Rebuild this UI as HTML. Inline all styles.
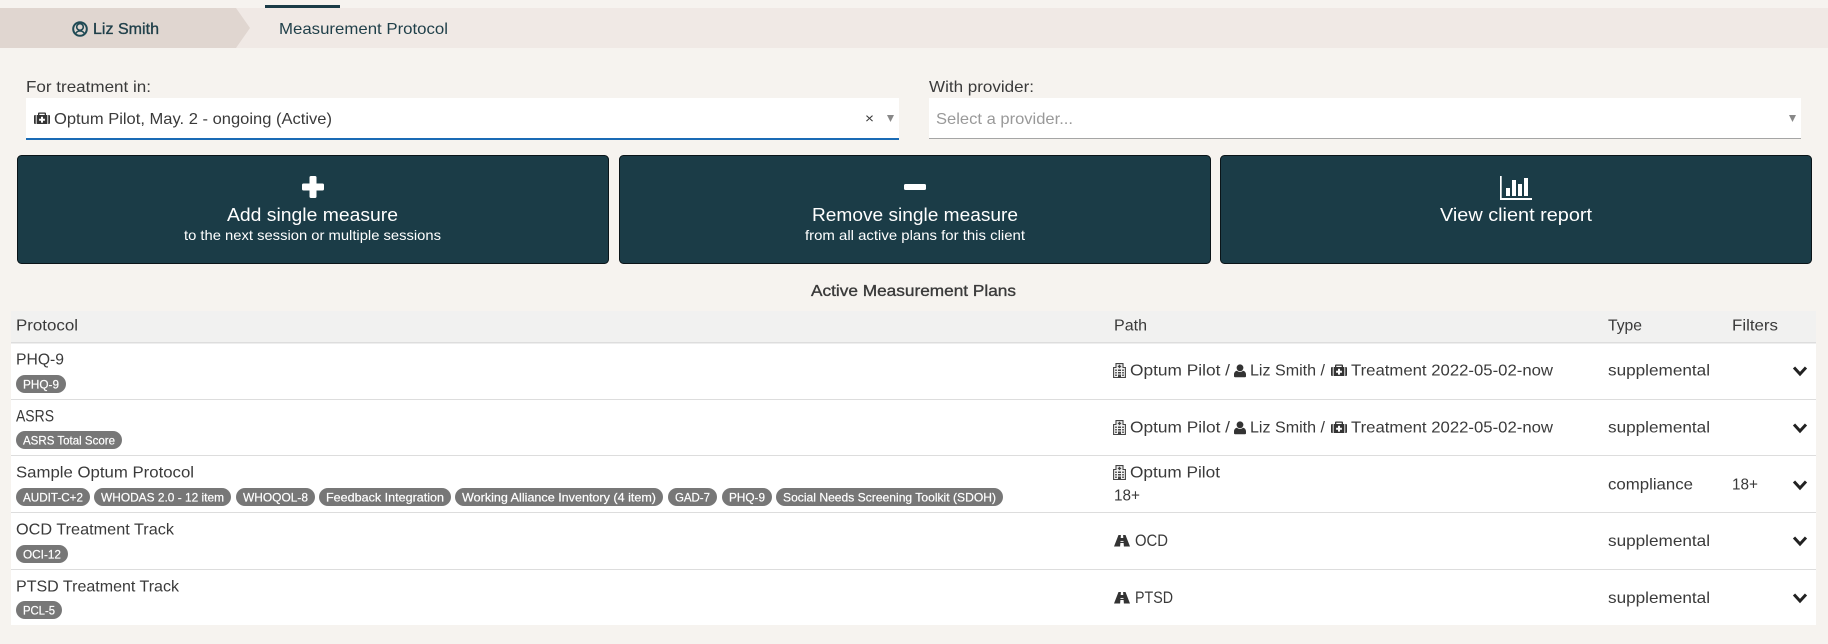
<!DOCTYPE html>
<html><head><meta charset="utf-8"><title>Measurement Protocol</title>
<style>
html,body{margin:0;padding:0;background:#f6f3ef;width:1828px;height:644px;overflow:hidden}
svg{display:block;font-family:"Liberation Sans",sans-serif;font-size:16px;fill:#3a3a3a}
.b{font-size:12px;fill:#fff;stroke:#fff;stroke-width:.2px}
.w{fill:#fff}
.t{fill:#1f3f49}
.s{stroke-width:.35px}
</style></head><body>
<svg width="1828" height="644" viewBox="0 0 1828 644" xmlns="http://www.w3.org/2000/svg">
<defs>
<g id="med"><path d="M5 1.500h6a1 1 0 0 1 1 1V4h3a1 1 0 0 1 1 1v7a1 1 0 0 1-1 1H1a1 1 0 0 1-1-1V5a1 1 0 0 1 1-1h3V2.500a1 1 0 0 1 1-1zM5.300 2.800V4h5.400V2.800z" fill="#333" fill-rule="evenodd"/><path d="M2.200 4v9M13.800 4v9" stroke="#fff" stroke-width=".9"/><path d="M7 5.800h2v1.900h1.900v2H9v1.900H7V9.700H5.100v-2H7z" fill="#fff"/></g>
<g id="hos"><path d="M.6 14.500V4.500h2.400V.6h7v3.900h2.400v10z" fill="#f4f4f4" stroke="#444" stroke-width="1.100"/><path d="M5.800 1.800h1.400v1h1v1.300h-1v1H5.800v-1h-1V2.800h1zM2.200 6.500h1.600V8H2.200zM2.200 9h1.600v1.500H2.200zM2.200 11.500h1.600V13H2.200zM5 6.500h3V8H5zM5 9h3v1.500H5zM9.200 6.500h1.600V8H9.200zM9.200 9h1.600v1.500H9.200zM9.200 11.500h1.600V13H9.200zM5 11.500h3V15H5z" fill="#444"/></g>
<g id="usr"><circle cx="6" cy="3.800" r="3.400" fill="#333"/><path d="M0 12.300V10.500C0 8.300 1.500 7 3 6.800c.8.800 1.900 1.200 3 1.200s2.200-.4 3-1.200c1.500.2 3 1.500 3 3.700v1.800c0 .6-.5 1-1 1H1c-.5 0-1-.4-1-1z" fill="#333"/></g>
<g id="road"><path d="M4.500 0h2.400l-.2 3h2.600L9.100 0h2.400L16 11.500H9.900L9.600 8H6.400L6.100 11.500H0z" fill="#333"/><path d="M6.700 3.200h2.600l.2 2.800h-3z" fill="#333"/><path d="M6.500 6.400h3" stroke="#fff" stroke-width=".9"/></g>
<path id="chev" d="M1 1.500l6 6.500 6-6.500" fill="none" stroke="#222" stroke-width="3"/>
</defs>

<!-- Breadcrumb bar -->
<rect y="8" width="1828" height="40" fill="#f0e9e5"/>
<path d="M0 8H236L250 28 236 48H0z" fill="#e0d6d0"/>
<rect x="265" y="5" width="75" height="3" fill="#1b3c47"/>
<circle cx="80" cy="29" r="6.800" fill="none" stroke="#1f4a54" stroke-width="2"/>
<circle cx="80" cy="27" r="3.300" fill="none" stroke="#1f4a54" stroke-width="1.600"/>
<path d="M75.500 34.500c.5-2.500 2-3.500 4.500-3.500s4 1 4.500 3.500" fill="none" stroke="#1f4a54" stroke-width="1.400"/>
<text x="93" y="34" textLength="66" lengthAdjust="spacingAndGlyphs" class="t s" stroke="#1f3f49">Liz Smith</text>
<text x="279" y="34" textLength="169" lengthAdjust="spacingAndGlyphs" class="t">Measurement Protocol</text>

<!-- Filters -->
<text x="26" y="92" textLength="125" lengthAdjust="spacingAndGlyphs">For treatment in:</text>
<rect x="26" y="98" width="873" height="42" fill="#fff"/>
<rect x="26" y="138" width="873" height="2" fill="#1a6bb5"/>
<use href="#med" x="34" y="111"/>
<text x="54" y="124" textLength="278" lengthAdjust="spacingAndGlyphs">Optum Pilot, May. 2 - ongoing (Active)</text>
<text x="865" y="123" textLength="9" lengthAdjust="spacingAndGlyphs" font-size="14">×</text>
<path d="M887 115h7l-3.500 7z" fill="#888"/>

<text x="929" y="92" textLength="105" lengthAdjust="spacingAndGlyphs">With provider:</text>
<rect x="929" y="98" width="872" height="41" fill="#fff"/>
<rect x="929" y="138" width="872" height="1" fill="#a5a5a5"/>
<text x="936" y="124" textLength="137" lengthAdjust="spacingAndGlyphs" fill="#999">Select a provider...</text>
<path d="M1789 115h7l-3.500 7z" fill="#888"/>

<!-- Buttons -->
<rect x="17.500" y="155.500" width="591" height="108" rx="4" fill="#1b3c47" stroke="#0a1418"/>
<rect x="619.500" y="155.500" width="591" height="108" rx="4" fill="#1b3c47" stroke="#0a1418"/>
<rect x="1220.500" y="155.500" width="591" height="108" rx="4" fill="#1b3c47" stroke="#0a1418"/>
<rect x="309.500" y="176" width="7" height="22" rx="1.500" fill="#fff"/>
<rect x="302" y="183.500" width="22" height="7" rx="1.500" fill="#fff"/>
<rect x="904" y="184" width="22" height="6" rx="1.500" fill="#fff"/>
<path d="M1500 176h1.700v22H1532v2h-32zM1506 188h4v8h-4zM1512 180h4v16h-4zM1518 184h4v12h-4zM1524 178h4v18h-4z" fill="#fff"/>
<text x="227" y="221" textLength="171" lengthAdjust="spacingAndGlyphs" font-size="18" class="w">Add single measure</text>
<text x="184" y="240" textLength="257" lengthAdjust="spacingAndGlyphs" font-size="14" class="w">to the next session or multiple sessions</text>
<text x="812" y="221" textLength="206" lengthAdjust="spacingAndGlyphs" font-size="18" class="w">Remove single measure</text>
<text x="805" y="240" textLength="220" lengthAdjust="spacingAndGlyphs" font-size="14" class="w">from all active plans for this client</text>
<text x="1440" y="221" textLength="152" lengthAdjust="spacingAndGlyphs" font-size="18" class="w">View client report</text>

<text x="811" y="296" textLength="205" lengthAdjust="spacingAndGlyphs" class="s" stroke="#3a3a3a">Active Measurement Plans</text>

<!-- Table -->
<rect x="11" y="311" width="1805" height="32" fill="#f1f1f0"/>
<rect x="11" y="342" width="1805" height="283" fill="#fff"/>
<rect x="11" y="342" width="1805" height="1.500" fill="#ddd"/>
<rect x="11" y="399" width="1805" height="1" fill="#ddd"/>
<rect x="11" y="455" width="1805" height="1" fill="#ddd"/>
<rect x="11" y="512" width="1805" height="1" fill="#ddd"/>
<rect x="11" y="569" width="1805" height="1" fill="#ddd"/>
<text x="16" y="330.500" textLength="62" lengthAdjust="spacingAndGlyphs">Protocol</text>
<text x="1114" y="330.500" textLength="33" lengthAdjust="spacingAndGlyphs">Path</text>
<text x="1608" y="330.500" textLength="34" lengthAdjust="spacingAndGlyphs">Type</text>
<text x="1732" y="330.500" textLength="46" lengthAdjust="spacingAndGlyphs">Filters</text>

<!-- Row 1 -->
<text x="16" y="364.500" textLength="48" lengthAdjust="spacingAndGlyphs">PHQ-9</text>
<rect x="16" y="375" width="50" height="18" rx="9" fill="#777"/>
<text x="23" y="388.500" textLength="36" lengthAdjust="spacingAndGlyphs" class="b">PHQ-9</text>
<use href="#hos" x="1113" y="363"/>
<text x="1130" y="375.500" textLength="100" lengthAdjust="spacingAndGlyphs">Optum Pilot /</text>
<use href="#usr" x="1234" y="364"/>
<text x="1250" y="375.500" textLength="75" lengthAdjust="spacingAndGlyphs">Liz Smith /</text>
<use href="#med" x="1331" y="363"/>
<text x="1351" y="375.500" textLength="202" lengthAdjust="spacingAndGlyphs">Treatment 2022-05-02-now</text>
<text x="1608" y="375.500" textLength="102" lengthAdjust="spacingAndGlyphs">supplemental</text>
<use href="#chev" x="1793" y="366"/>

<!-- Row 2 -->
<text x="16" y="421.500" font-size="17" textLength="38" lengthAdjust="spacingAndGlyphs">ASRS</text>
<rect x="16" y="431" width="106" height="18" rx="9" fill="#777"/>
<text x="23" y="444.500" textLength="92" lengthAdjust="spacingAndGlyphs" class="b">ASRS Total Score</text>
<use href="#hos" x="1113" y="420"/>
<text x="1130" y="432.500" textLength="100" lengthAdjust="spacingAndGlyphs">Optum Pilot /</text>
<use href="#usr" x="1234" y="421"/>
<text x="1250" y="432.500" textLength="75" lengthAdjust="spacingAndGlyphs">Liz Smith /</text>
<use href="#med" x="1331" y="420"/>
<text x="1351" y="432.500" textLength="202" lengthAdjust="spacingAndGlyphs">Treatment 2022-05-02-now</text>
<text x="1608" y="432.500" textLength="102" lengthAdjust="spacingAndGlyphs">supplemental</text>
<use href="#chev" x="1793" y="423"/>

<!-- Row 3 -->
<text x="16" y="477.500" textLength="178" lengthAdjust="spacingAndGlyphs">Sample Optum Protocol</text>
<rect x="16" y="488" width="74" height="18" rx="9" fill="#777"/>
<text x="23" y="501.500" textLength="60" lengthAdjust="spacingAndGlyphs" class="b">AUDIT-C+2</text>
<rect x="94" y="488" width="137" height="18" rx="9" fill="#777"/>
<text x="101" y="501.500" textLength="123" lengthAdjust="spacingAndGlyphs" class="b">WHODAS 2.0 - 12 item</text>
<rect x="236" y="488" width="79" height="18" rx="9" fill="#777"/>
<text x="243" y="501.500" textLength="65" lengthAdjust="spacingAndGlyphs" class="b">WHOQOL-8</text>
<rect x="319" y="488" width="132" height="18" rx="9" fill="#777"/>
<text x="326" y="501.500" textLength="118" lengthAdjust="spacingAndGlyphs" class="b">Feedback Integration</text>
<rect x="455" y="488" width="208" height="18" rx="9" fill="#777"/>
<text x="462" y="501.500" textLength="194" lengthAdjust="spacingAndGlyphs" class="b">Working Alliance Inventory (4 item)</text>
<rect x="668" y="488" width="49" height="18" rx="9" fill="#777"/>
<text x="675" y="501.500" textLength="35" lengthAdjust="spacingAndGlyphs" class="b">GAD-7</text>
<rect x="722" y="488" width="50" height="18" rx="9" fill="#777"/>
<text x="729" y="501.500" textLength="36" lengthAdjust="spacingAndGlyphs" class="b">PHQ-9</text>
<rect x="776" y="488" width="227" height="18" rx="9" fill="#777"/>
<text x="783" y="501.500" textLength="213" lengthAdjust="spacingAndGlyphs" class="b">Social Needs Screening Toolkit (SDOH)</text>
<use href="#hos" x="1113" y="465"/>
<text x="1130" y="477.500" textLength="90" lengthAdjust="spacingAndGlyphs">Optum Pilot</text>
<text x="1114" y="500.500" textLength="26" lengthAdjust="spacingAndGlyphs">18+</text>
<text x="1608" y="489.500" textLength="85" lengthAdjust="spacingAndGlyphs">compliance</text>
<text x="1732" y="489.500" textLength="26" lengthAdjust="spacingAndGlyphs">18+</text>
<use href="#chev" x="1793" y="480"/>

<!-- Row 4 -->
<text x="16" y="534.500" textLength="158" lengthAdjust="spacingAndGlyphs">OCD Treatment Track</text>
<rect x="16" y="545" width="52" height="18" rx="9" fill="#777"/>
<text x="23" y="558.500" textLength="38" lengthAdjust="spacingAndGlyphs" class="b">OCI-12</text>
<use href="#road" x="1114" y="535"/>
<text x="1135" y="546" font-size="17" textLength="33" lengthAdjust="spacingAndGlyphs">OCD</text>
<text x="1608" y="546" textLength="102" lengthAdjust="spacingAndGlyphs">supplemental</text>
<use href="#chev" x="1793" y="536"/>

<!-- Row 5 -->
<text x="16" y="591.500" textLength="163" lengthAdjust="spacingAndGlyphs">PTSD Treatment Track</text>
<rect x="16" y="601" width="46" height="18" rx="9" fill="#777"/>
<text x="23" y="614.500" textLength="32" lengthAdjust="spacingAndGlyphs" class="b">PCL-5</text>
<use href="#road" x="1114" y="592"/>
<text x="1135" y="603" font-size="17" textLength="38" lengthAdjust="spacingAndGlyphs">PTSD</text>
<text x="1608" y="603" textLength="102" lengthAdjust="spacingAndGlyphs">supplemental</text>
<use href="#chev" x="1793" y="593"/>
</svg>
</body></html>
